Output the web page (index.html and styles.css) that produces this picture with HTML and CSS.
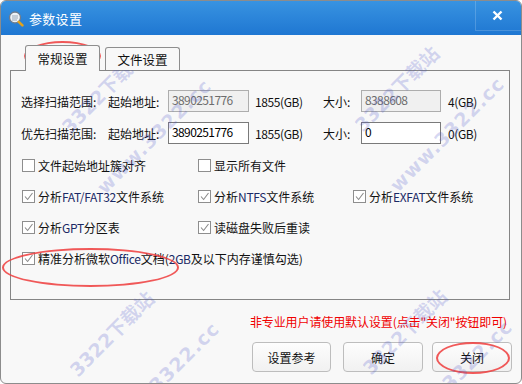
FILE: index.html
```html
<!DOCTYPE html>
<html>
<head>
<meta charset="utf-8">
<title>参数设置</title>
<link rel="stylesheet" href="styles.css">
</head>
<body>
<div class="win">
  <div class="titlebar">
    <svg class="appicon" width="16" height="16" viewBox="0 0 16 16">
      <circle cx="7" cy="6.5" r="5.5" fill="#eef2f6" stroke="#6f7c8c" stroke-width="1.3"/>
      <path d="M4 5h6M4 7h6M4 9h5" stroke="#9aa8b8" stroke-width="1"/>
      <path d="M10.8 10.8l3.6 3.6" stroke="#e2a21c" stroke-width="2.6" stroke-linecap="round"/>
    </svg>
    <span class="title">参数设置</span>
    <div class="closebtn">
      <svg width="11" height="11" viewBox="0 0 11 11"><path d="M1.5 1.5l8 8M9.5 1.5l-8 8" stroke="#fff" stroke-width="2.4"/></svg>
    </div>
  </div>
  <div class="content">
    <div class="tabs">
      <div class="tab active">常规设置</div>
      <div class="tab">文件设置</div>
    </div>
    <div class="panel">
      <div class="frow">
        <span class="c-label">选择扫描范围:</span>
        <span class="c-start">起始地址:</span>
        <span class="inp disabled">3890251776</span>
        <span class="c-gb">1855(GB)</span>
        <span class="c-size">大小:</span>
        <span class="inp inp2 disabled">8388608</span>
        <span class="c-gb2">4(GB)</span>
      </div>
      <div class="frow">
        <span class="c-label">优先扫描范围:</span>
        <span class="c-start">起始地址:</span>
        <span class="inp">3890251776</span>
        <span class="c-gb">1855(GB)</span>
        <span class="c-size">大小:</span>
        <span class="inp inp2">0</span>
        <span class="c-gb2">0(GB)</span>
      </div>
      <div class="checks">
        <label class="chk"><span class="box"></span>文件起始地址簇对齐</label>
        <label class="chk"><span class="box"></span>显示所有文件</label>
        <span></span>
        <label class="chk"><span class="box on"><svg width="11" height="11" viewBox="0 0 11 11"><path d="M2 5.5l2.6 3L9.5 2" fill="none" stroke="#8a8a8a" stroke-width="1.1"/></svg></span>分析<span class="lat">FAT/FAT32</span>文件系统</label>
        <label class="chk"><span class="box on"><svg width="11" height="11" viewBox="0 0 11 11"><path d="M2 5.5l2.6 3L9.5 2" fill="none" stroke="#8a8a8a" stroke-width="1.1"/></svg></span>分析<span class="lat">NTFS</span>文件系统</label>
        <label class="chk"><span class="box on"><svg width="11" height="11" viewBox="0 0 11 11"><path d="M2 5.5l2.6 3L9.5 2" fill="none" stroke="#8a8a8a" stroke-width="1.1"/></svg></span>分析<span class="lat">EXFAT</span>文件系统</label>
        <label class="chk"><span class="box on"><svg width="11" height="11" viewBox="0 0 11 11"><path d="M2 5.5l2.6 3L9.5 2" fill="none" stroke="#8a8a8a" stroke-width="1.1"/></svg></span>分析<span class="lat">GPT</span>分区表</label>
        <label class="chk"><span class="box on"><svg width="11" height="11" viewBox="0 0 11 11"><path d="M2 5.5l2.6 3L9.5 2" fill="none" stroke="#8a8a8a" stroke-width="1.1"/></svg></span>读磁盘失败后重读</label>
        <span></span>
        <label class="chk wide"><span class="box on"><svg width="11" height="11" viewBox="0 0 11 11"><path d="M2 5.5l2.6 3L9.5 2" fill="none" stroke="#8a8a8a" stroke-width="1.1"/></svg></span>精准分析微软<span class="lat">Office</span>文档(<span class="lat">2GB</span>及以下内存谨慎勾选)</label>
      </div>
    </div>
    <div class="note">非专业用户请使用默认设置(点击"关闭"按钮即可)</div>
    <div class="buttons">
      <div class="btn b1">设置参考</div>
      <div class="btn b2">确定</div>
      <div class="btn b3">关闭</div>
    </div>
  </div>
  <div class="ring r1"></div>
  <div class="ring r2"></div>
  <div class="ring r3"></div>
  <div class="wm w1">3322下载站</div>
  <div class="wm w2">www.3322.cc</div>
  <div class="wm w3">3322下载站</div>
  <div class="wm w4">www.3322.cc</div>
  <div class="wm w5">3322下载站</div>
  <div class="wm w6">www.3322.cc</div>
  <div class="wm w7">3322下载站</div>
  <div class="wm w8">www.3322.cc</div>
</div>
</body>
</html>
```
FILE: styles.css
```css
* { box-sizing: border-box; }
html, body { margin: 0; padding: 0; background: #ffffff; }
body { font-family: "Noto Sans CJK SC", "Noto Sans", sans-serif; font-size: 12px; color: #111; }

.win {
  position: relative;
  width: 522px;
  height: 384px;
  border: 1px solid #8c8c8c;
  border-radius: 6px;
  overflow: hidden;
  background: #f8f8f8;
}

.titlebar {
  height: 34px;
  background: linear-gradient(#3893e1, #1f77d2);
  display: flex;
  align-items: center;
  padding-left: 7px;
  color: #fff;
}
.appicon { margin-top: 2px; }
.title { margin-left: 5px; font-size: 13px; letter-spacing: 0.3px; line-height: 1; }
.closebtn {
  margin-left: auto;
  align-self: flex-start;
  width: 46px;
  height: 30px;
  display: flex;
  align-items: center;
  justify-content: center;
  border-left: 1px solid rgba(255,255,255,0.18);
  border-bottom: 1px solid rgba(255,255,255,0.18);
  padding-right: 2px;
}

.content { padding: 0 12px 0 9px; }

.tabs {
  display: flex;
  align-items: flex-end;
  gap: 5px;
  padding-left: 15px;
  margin-top: 10px;
  position: relative;
  z-index: 2;
}
.tab {
  width: 75px;
  height: 23px;
  border: 1px solid #8e8e8e;
  border-bottom: none;
  border-radius: 3px 3px 0 0;
  background: #f8f8f8;
  display: flex;
  align-items: center;
  justify-content: center;
  font-size: 12.5px;
}
.tab.active { height: 26px; margin-bottom: -1px; }

.panel {
  width: 500px;
  height: 230px;
  border: 1px solid #858585;
  padding: 19px 0 0 10px;
}

.frow {
  display: flex;
  align-items: center;
  height: 22px;
  margin-bottom: 10px;
}
.c-label { width: 87px; }
.c-start { width: 60px; }
.c-gb { width: 68px; margin-left: 6px; letter-spacing: -0.4px; }
.c-size { width: 38px; }
.c-gb2 { margin-left: 7px; letter-spacing: -0.4px; }
.inp {
  width: 81px;
  height: 22px;
  border: 1px solid #7a7a7a;
  background: #fff;
  padding: 1px 0 0 3px;
  line-height: 16px;
  align-self: flex-start;
  letter-spacing: -0.6px;
  color: #000;
}
.inp2 { width: 80px; }
.inp.disabled { background: #f0f0f0; border-color: #adadad; color: #6d6d6d; }

.checks {
  display: grid;
  grid-template-columns: 176px 155px 1fr;
  grid-auto-rows: 20px;
  row-gap: 11px;
  margin-top: 11px;
  padding-left: 1px;
}
.chk { display: flex; align-items: center; white-space: nowrap; }
.chk.wide { grid-column: 1 / -1; }
.box {
  width: 13px;
  height: 13px;
  border: 1px solid #8e8e8e;
  background: #fff;
  margin-right: 3px;
  display: flex;
  align-items: center;
  justify-content: center;
}
.lat { color: #1b2a66; letter-spacing: -0.3px; }

.note {
  color: #f00000;
  text-align: right;
  padding-right: 2px;
  margin-top: 14px;
  line-height: 16px;
  letter-spacing: -0.1px;
}

.buttons {
  display: flex;
  justify-content: flex-end;
  margin-top: 12px;
  padding-right: -3px;
  margin-right: -3px;
}
.btn {
  width: 80px;
  height: 30px;
  border: 1px solid #bdbdbd;
  border-radius: 4px;
  background: linear-gradient(#fdfdfd, #f1f1f1);
  display: flex;
  align-items: center;
  justify-content: center;
}
.b1 { width: 79px; }
.b2 { margin-left: 12px; }
.b3 { margin-left: 9px; }

.ring {
  position: absolute;
  border: 2px solid rgba(238, 60, 60, 0.85);
  border-radius: 50%;
  pointer-events: none;
}
.r1 { left: 23px; top: 40px; width: 77px; height: 30px; }
.r2 { left: 1px; top: 247px; width: 177px; height: 39px; }
.r3 { left: 435px; top: 341px; width: 74px; height: 32px; }

.wm {
  position: absolute;
  font-family: "DejaVu Sans", "Noto Sans CJK SC", sans-serif;
  font-weight: bold;
  font-size: 19px;
  line-height: 19px;
  height: 19px;
  white-space: nowrap;
  color: rgba(70, 80, 200, 0.22);
  transform-origin: 0 100%;
  transform: rotate(-45deg);
  pointer-events: none;
}
.w1 { left: 71px; top: 117px; }
.w2 { left: 106px; top: 177px; letter-spacing: 1px; }
.w3 { left: 364px; top: 115px; }
.w4 { left: 399px; top: 175px; letter-spacing: 1px; }
.w5 { left: 79px; top: 360px; }
.w6 { left: 114px; top: 420px; letter-spacing: 1px; }
.w7 { left: 372px; top: 358px; }
.w8 { left: 407px; top: 418px; letter-spacing: 1px; }
```
